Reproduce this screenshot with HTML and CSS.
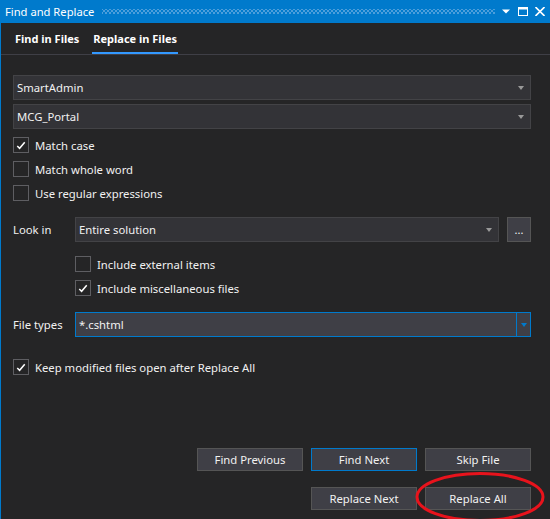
FILE: index.html
```html
<!DOCTYPE html>
<html>
<head>
<meta charset="utf-8">
<link rel="stylesheet" href="styles.css">
</head>
<body>
<div class="window">
  <div class="titlebar">
    <span class="title">Find and Replace</span>
    <span class="grip"></span>
    <span class="tb-icons">
      <svg class="tb-ico" width="9" height="9" viewBox="0 0 9 9"><path d="M0 2.5 H8 L4 6.5 Z" fill="#fff"/></svg>
      <svg class="tb-ico" width="10" height="9" viewBox="0 0 10 9"><rect x="0.5" y="0.5" width="9" height="8" fill="none" stroke="#fff"/><rect x="0" y="0" width="10" height="2.5" fill="#fff"/></svg>
      <svg class="tb-ico" width="10" height="9" viewBox="0 0 10 9"><path d="M0.5 0 L9.5 9 M9.5 0 L0.5 9" stroke="#fff" stroke-width="1.6"/></svg>
    </span>
  </div>
  <div class="content">
    <div class="tabs">
      <span class="tab">Find in Files</span>
      <span class="tab active">Replace in Files</span>
    </div>
    <div class="form">
      <div class="combo first"><span class="combo-text">SmartAdmin</span><span class="arrow"></span></div>
      <div class="combo second"><span class="combo-text">MCG_Portal</span><span class="arrow"></span></div>
      <div class="checks">
        <label class="check"><span class="box checked"><svg width="15" height="15" viewBox="0 0 15 15"><path d="M3.5 8 L6 10.5 L11.5 4" fill="none" stroke="#fff" stroke-width="1.6"/></svg></span>Match case</label>
        <label class="check"><span class="box"></span>Match whole word</label>
        <label class="check"><span class="box"></span>Use regular expressions</label>
      </div>
      <div class="field look">
        <span class="field-label">Look in</span>
        <div class="combo grow"><span class="combo-text">Entire solution</span><span class="arrow"></span></div>
        <button class="dots">...</button>
      </div>
      <div class="checks indent">
        <label class="check"><span class="box"></span>Include external items</label>
        <label class="check"><span class="box checked"><svg width="15" height="15" viewBox="0 0 15 15"><path d="M3.5 8 L6 10.5 L11.5 4" fill="none" stroke="#fff" stroke-width="1.6"/></svg></span>Include miscellaneous files</label>
      </div>
      <div class="field types">
        <span class="field-label">File types</span>
        <div class="combo grow focus"><span class="combo-text">*.cshtml</span><span class="drop"><span class="arrow blue"></span></span></div>
      </div>
      <div class="checks keep">
        <label class="check"><span class="box checked"><svg width="15" height="15" viewBox="0 0 15 15"><path d="M3.5 8 L6 10.5 L11.5 4" fill="none" stroke="#fff" stroke-width="1.6"/></svg></span>Keep modified files open after Replace All</label>
      </div>
      <div class="buttons">
        <button class="btn">Find Previous</button>
        <button class="btn primary">Find Next</button>
        <button class="btn">Skip File</button>
        <button class="btn col2">Replace Next</button>
        <button class="btn">Replace All</button>
      </div>
    </div>
  </div>
  <svg class="circle" width="550" height="519" viewBox="0 0 550 519"><ellipse cx="480" cy="497" rx="63" ry="23.5" fill="none" stroke="#e8131c" stroke-width="3"/></svg>
</div>
</body>
</html>
```
FILE: styles.css
```css
html, body {
  margin: 0;
  padding: 0;
  background: #252526;
}
body {
  width: 550px;
  height: 519px;
  overflow: hidden;
  font-family: "Segoe UI", "Noto Sans", "Open Sans", sans-serif;
  font-size: 11.3px;
  color: #f1f1f1;
}
.window {
  position: relative;
  width: 550px;
  height: 519px;
  display: flex;
  flex-direction: column;
}
.titlebar {
  height: 23px;
  background: #007acc;
  display: flex;
  align-items: center;
  padding-left: 5px;
  flex: none;
}
.title {
  color: #fff;
  font-size: 11.2px;
  line-height: 23px;
}
.grip {
  flex: 1;
  height: 5px;
  margin: 0 7px 0 8px;
  background-image:
    radial-gradient(circle, #4fa0dc 0.7px, transparent 0.9px),
    radial-gradient(circle, #4fa0dc 0.7px, transparent 0.9px);
  background-size: 4px 4px;
  background-position: 0 0, 2px 2px;
}
.tb-icons {
  display: flex;
  align-items: center;
  gap: 7px;
  padding-right: 5px;
}
.tb-ico { display: block; }
.content {
  flex: 1;
  border-left: 1px solid #007acc;
  display: flex;
  flex-direction: column;
}
.tabs {
  height: 31px;
  border-bottom: 1px solid #3f3f46;
  display: flex;
  align-items: stretch;
  padding-left: 13px;
  gap: 12px;
  flex: none;
}
.tab {
  font-weight: bold;
  font-size: 11px;
  color: #fff;
  display: flex;
  align-items: center;
  padding: 0 1px;
}
.tab.active {
  box-shadow: inset 0 -2px #3399ff;
}
.form {
  flex: 1;
  display: flex;
  flex-direction: column;
  padding: 20px 19px 9px 12px;
}
.combo {
  height: 25px;
  box-sizing: border-box;
  background: #333337;
  border: 1px solid #434346;
  display: flex;
  align-items: center;
  padding-left: 3px;
}
.combo.second { margin-top: 4px; }
.combo-text { flex: 1; }
.arrow {
  width: 0;
  height: 0;
  border-left: 3.5px solid transparent;
  border-right: 3.5px solid transparent;
  border-top: 4px solid #999;
  margin-right: 6px;
}
.arrow.blue {
  border-top-color: #007acc;
  margin: 0;
}
.combo.focus {
  background: #3f3f46;
  border-color: #007acc;
}
.drop {
  width: 13px;
  align-self: stretch;
  border-left: 1px solid #007acc;
  display: flex;
  align-items: center;
  justify-content: center;
}
.checks {
  display: flex;
  flex-direction: column;
  margin-top: 4px;
}
.check {
  height: 24px;
  display: flex;
  align-items: center;
  gap: 6px;
}
.box {
  width: 16px;
  height: 16px;
  box-sizing: border-box;
  border: 1px solid #5e5e62;
  display: flex;
  align-items: center;
  justify-content: center;
}
.box svg { display: block; }
.field {
  display: flex;
  align-items: center;
}
.field.look { margin-top: 12px; }
.field.types { margin-top: 12px; }
.field-label {
  width: 62px;
  flex: none;
}
.grow { flex: 1; }
.dots {
  width: 24px;
  height: 25px;
  margin-left: 8px;
  box-sizing: border-box;
  background: #3f3f46;
  border: 1px solid #555555;
  color: #f1f1f1;
  font: inherit;
  font-size: 11px;
  padding: 0;
  line-height: 20px;
}
.checks.indent {
  margin-top: 10px;
  padding-left: 62px;
}
.checks.keep { margin-top: 18px; }
.buttons {
  margin-top: auto;
  display: grid;
  grid-template-columns: repeat(3, 106px);
  column-gap: 8px;
  row-gap: 16px;
  justify-content: end;
}
.btn {
  height: 23px;
  background: #3f3f46;
  border: 1px solid #555555;
  color: #f1f1f1;
  font: inherit;
  padding: 0;
}
.btn.primary { border-color: #007acc; }
.btn.col2 { grid-column: 2; }
.circle {
  position: absolute;
  left: 0;
  top: 0;
  pointer-events: none;
}
```
